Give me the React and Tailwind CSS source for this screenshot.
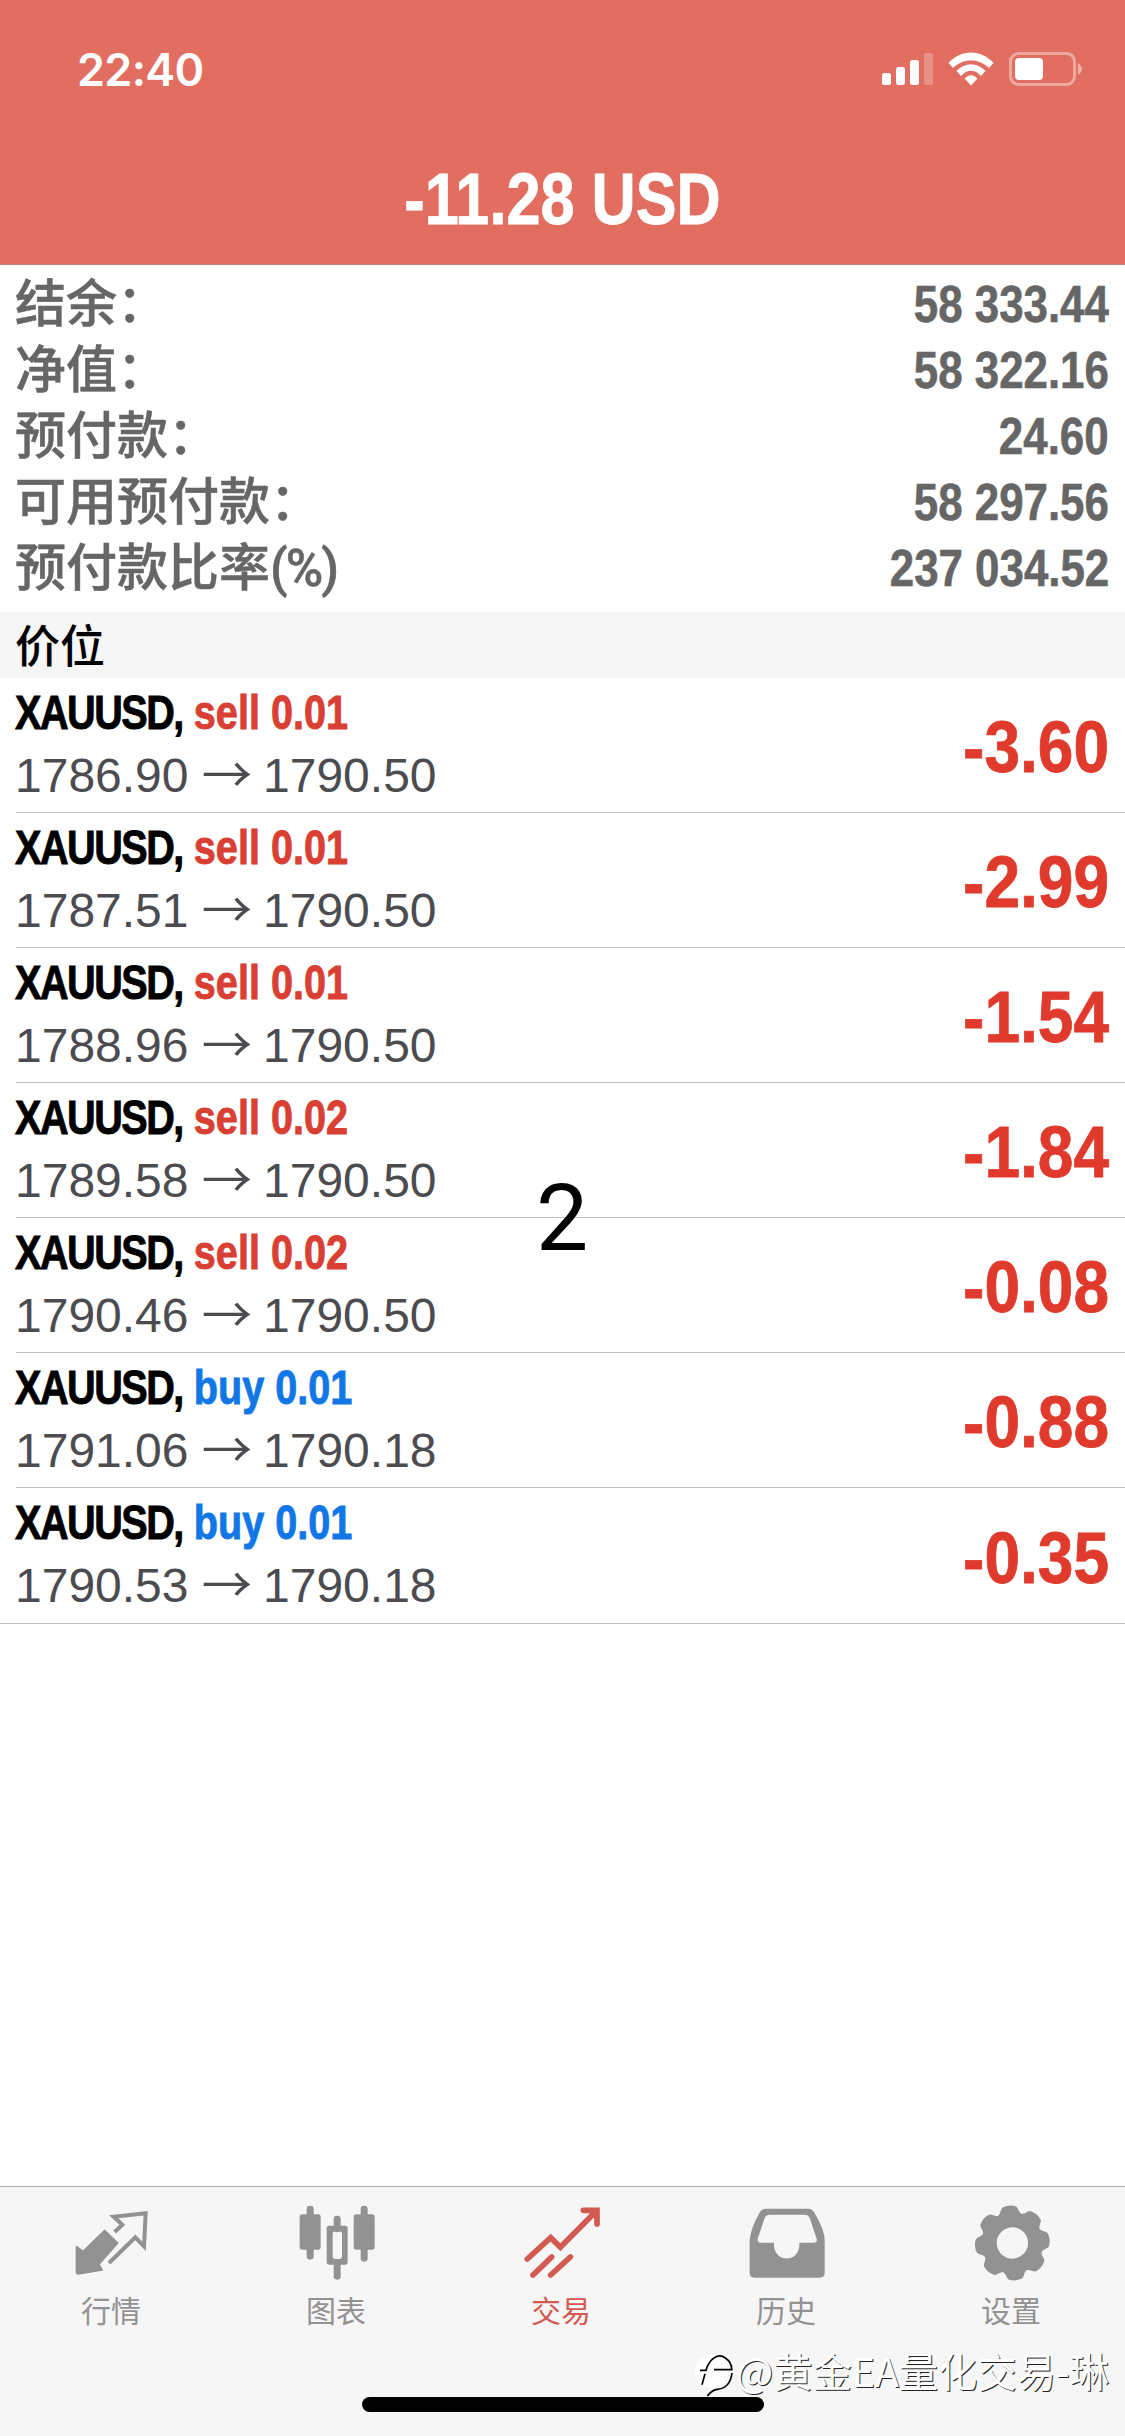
const summary = [
  { label: '结余：', value: '58 333.44' },
  { label: '净值：', value: '58 322.16' },
  { label: '预付款：', value: '24.60' },
  { label: '可用预付款：', value: '58 297.56' },
  { label: '预付款比率', unit: '(%)', value: '237 034.52' },
]

const positions = [
  { side: 'sell', volume: '0.01', open: '1786.90', current: '1790.50', profit: '-3.60' },
  { side: 'sell', volume: '0.01', open: '1787.51', current: '1790.50', profit: '-2.99' },
  { side: 'sell', volume: '0.01', open: '1788.96', current: '1790.50', profit: '-1.54' },
  { side: 'sell', volume: '0.02', open: '1789.58', current: '1790.50', profit: '-1.84' },
  { side: 'sell', volume: '0.02', open: '1790.46', current: '1790.50', profit: '-0.08' },
  { side: 'buy', volume: '0.01', open: '1791.06', current: '1790.18', profit: '-0.88' },
  { side: 'buy', volume: '0.01', open: '1790.53', current: '1790.18', profit: '-0.35' },
]

function QuotesIcon() {
  return (
    <svg viewBox="217 100 240 240" className="size-20">
      <path
        d="M312 183 L350 220 L294 284 L304 300 L233 312 Q228 312 228 306 V231 L247 246 Z"
        fill="currentColor"
        stroke="currentColor"
        strokeWidth="6"
        strokeLinejoin="round"
      />
      <path
        d="M342 187 L365 165 L339 141 L435 131 L430 230 L404 203 L325 280"
        fill="none"
        stroke="currentColor"
        strokeWidth="12"
      />
    </svg>
  )
}

function ChartsIcon() {
  return (
    <svg viewBox="892 100 240 240" className="size-20" fill="currentColor">
      <rect x="918" y="108" width="21" height="162" rx="10" />
      <rect x="897" y="134" width="63" height="106" rx="8" />
      <rect x="1080" y="108" width="21" height="168" rx="10" />
      <rect x="1059" y="134" width="63" height="106" rx="8" />
      <rect x="999" y="138" width="21" height="50" rx="10" />
      <rect x="999" y="270" width="21" height="60" rx="10" />
      <path
        fillRule="evenodd"
        d="M986 168 H1033 Q1041 168 1041 176 V277 Q1041 285 1033 285 H986 Q978 285 978 277 V176 Q978 168 986 168 Z M1004 185 Q996 185 996 193 V260 Q996 268 1004 268 H1016 Q1024 268 1024 260 V193 Q1024 185 1016 185 Z"
      />
    </svg>
  )
}

function TradeIcon() {
  return (
    <svg
      viewBox="367 100 240 240"
      className="size-20"
      fill="none"
      stroke="currentColor"
      strokeWidth="17"
      strokeLinecap="round"
    >
      <path d="M380 268 L450 204 L479 233 L584 127" />
      <path d="M548 122 H589 V163" />
      <path d="M397 316 L453 262 M450 316 L509 262" />
      <path d="M560 122 L589 151 V122 Z" fill="currentColor" strokeWidth="4" />
    </svg>
  )
}

function HistoryIcon() {
  return (
    <svg viewBox="202 100 240 240" className="size-20" fill="currentColor">
      <path
        fillRule="evenodd"
        d="M256 117 H382 Q394 117 400 127 Q432 180 432 212 V310 Q432 324 418 324 H221 Q207 324 207 310 V212 Q210 175 238 127 Q244 117 256 117 Z M268 135 Q256 135 252 145 L231 207 Q229 219 241 219 H280 V228 C283 279 353 279 356 228 V219 H399 Q411 219 408 207 L387 145 Q383 135 371 135 Z"
      />
    </svg>
  )
}

const gearTeeth = [0, 45, 90, 135, 180, 225, 270, 315]

function SettingsIcon() {
  return (
    <svg viewBox="877 100 240 240" className="size-20" fill="currentColor">
      <g transform="translate(995 220) rotate(-5)">
        <circle r="69" fill="none" stroke="currentColor" strokeWidth="44" />
        {gearTeeth.map((angle) => (
          <path
            key={angle}
            transform={`rotate(${angle})`}
            d="M-38 -80 L-33 -87 C-27 -92 -27 -102 -21 -108 Q0 -117 21 -108 C27 -102 27 -92 33 -87 L38 -80 Z"
          />
        ))}
      </g>
    </svg>
  )
}

const tabs = [
  { label: '行情', icon: QuotesIcon },
  { label: '图表', icon: ChartsIcon },
  { label: '交易', icon: TradeIcon, active: true },
  { label: '历史', icon: HistoryIcon },
  { label: '设置', icon: SettingsIcon },
]

function StatusBar() {
  return (
    <div className="flex h-[138px] items-center justify-between pl-[77px] pr-[41px]">
      <span className="font-['Inter'] text-[45px] font-semibold leading-none tracking-[-0.7px]">22:40</span>
      <svg viewBox="0 0 202 36" className="h-9 w-[202px]" fill="white">
        <rect x="0" y="22" width="9" height="12" rx="2.5" />
        <rect x="14" y="16" width="9" height="18" rx="2.5" />
        <rect x="28" y="9" width="9" height="25" rx="2.5" />
        <rect x="42" y="2" width="9" height="32" rx="2.5" opacity="0.25" />
        <path d="M66.500 12 C79 -2 99 -2 111.500 12 L107 17 C97 7 81 7 71 17 Z" />
        <path d="M74.500 20 C83 11 95 11 103.500 20 L99 25 C93 18 85 18 79 25 Z" />
        <path d="M82.500 27.500 C87 23 91 23 95.500 27.500 L89 34.500 Z" />
        <rect x="128.500" y="2.500" width="64" height="31" rx="8" fill="none" stroke="white" strokeWidth="3" opacity="0.4" />
        <rect x="133" y="7" width="28" height="22" rx="4" />
        <path d="M196 12 Q204 18 196 24 Z" opacity="0.45" />
      </svg>
    </div>
  )
}

function PositionRow({ position, last }) {
  return (
    <div className={last ? 'flex h-[136px] border-b border-[#c0c0c0]' : 'ml-4 flex h-[135px] border-b border-[#c0c0c0]'}>
      <div className={last ? 'ml-[15px] flex-1 pt-[7px]' : '-ml-px flex-1 pt-[7px]'}>
        <div className="origin-left scale-x-[0.825] whitespace-nowrap text-[48px] font-bold leading-[56px] text-black [-webkit-text-stroke:0.9px_currentColor]">
          <span className="tracking-[-1.8px]">XAUUSD,</span>{' '}
          <span className={position.side === 'sell' ? 'text-[#d93f33]' : 'text-[#1177e6]'}>
            {position.side} {position.volume}
          </span>
        </div>
        <div className="mt-[7px] flex text-[48px] leading-[56px] text-[#4c4c50]">
          <span>{position.open}</span>
          <span className="ml-3.5 mr-[12.5px] -translate-y-[5px] scale-x-105 font-['Noto_Sans_CJK_SC']">→</span>
          <span>{position.current}</span>
        </div>
      </div>
      <div className="mr-4 mt-1 origin-right scale-x-[0.89] self-center text-[72px] font-bold leading-none text-[#e03a2c] [-webkit-text-stroke:0.8px_currentColor]">
        {position.profit}
      </div>
    </div>
  )
}

export default function App() {
  return (
    <div className="relative flex h-[2436px] w-[1125px] flex-col overflow-hidden bg-white font-['Liberation_Sans','Noto_Sans_CJK_SC',sans-serif]">
      <header className="h-[265px] border-b border-[#c98078] bg-[#e26e61] text-white">
        <StatusBar />
        <h1 className="scale-x-[0.85] pt-[25px] text-center text-[72px] font-bold leading-none [-webkit-text-stroke:0.8px_currentColor]">
          -11.28 USD
        </h1>
      </header>

      <section className="h-[347px] pl-[15px] pr-4 pt-[6px] text-[51px] text-[#666666]">
        {summary.map((row) => (
          <div key={row.label} className="flex h-[66px] items-center justify-between">
            <span className="font-['Roboto','Noto_Sans_CJK_SC',sans-serif] font-medium leading-none [-webkit-text-stroke:0.5px_currentColor]">
              {row.label}
              {row.unit && <span className="tracking-[-2px]">{row.unit}</span>}
            </span>
            <span className="origin-right scale-x-[0.86] font-bold leading-none [-webkit-text-stroke:0.6px_currentColor]">
              {row.value}
            </span>
          </div>
        ))}
      </section>

      <div className="flex h-[66px] items-center bg-[#f6f6f6] pb-1 pl-[15px] font-['Noto_Sans_CJK_SC'] text-[45px] font-medium leading-none text-black">
        价位
      </div>

      <section className="flex-1">
        {positions.map((position, i) => (
          <PositionRow key={position.open} position={position} last={i === positions.length - 1} />
        ))}
      </section>

      <nav className="flex h-[250px] border-t border-[#adadad] bg-[#f6f6f6] pt-4">
        {tabs.map(({ label, icon: Icon, active }) => (
          <div
            key={label}
            className={
              active
                ? 'flex flex-1 flex-col items-center text-[#d25a50]'
                : 'flex flex-1 flex-col items-center text-[#929292]'
            }
          >
            <Icon />
            <span className="mr-[3px] mt-[11px] font-['Noto_Sans_CJK_SC'] text-[30px] leading-none">{label}</span>
          </div>
        ))}
      </nav>

      {/* page number, home indicator and watermark float above the screen */}
      <span className="absolute left-[536px] top-[1164px] font-['Roboto'] text-[93px] leading-[109px] text-black">2</span>
      <div className="absolute left-[362px] top-[2397px] h-[15px] w-[402px] rounded-full bg-black" />
      <div className="absolute left-[694px] top-[2350px] flex items-start text-white">
        <svg viewBox="12 34 126 144" className="h-12 w-[42px]" fill="none">
          <circle cx="64" cy="98" r="50" fill="white" />
          <path
            d="M30 95 H48 C58 60 85 42 106 58 C118 66 125 78 125 91 M72 93 H128 M45 105 L36 138 M126 103 C122 135 105 150 82 152 C65 154 58 165 52 172"
            stroke="black"
            strokeWidth="5"
          />
        </svg>
        <span className="whitespace-nowrap font-['Noto_Sans_CJK_SC'] text-[39.3px] leading-none [text-shadow:1px_1px_0_#222]">
          @黄金EA量化交易-琳
        </span>
      </div>
    </div>
  )
}
